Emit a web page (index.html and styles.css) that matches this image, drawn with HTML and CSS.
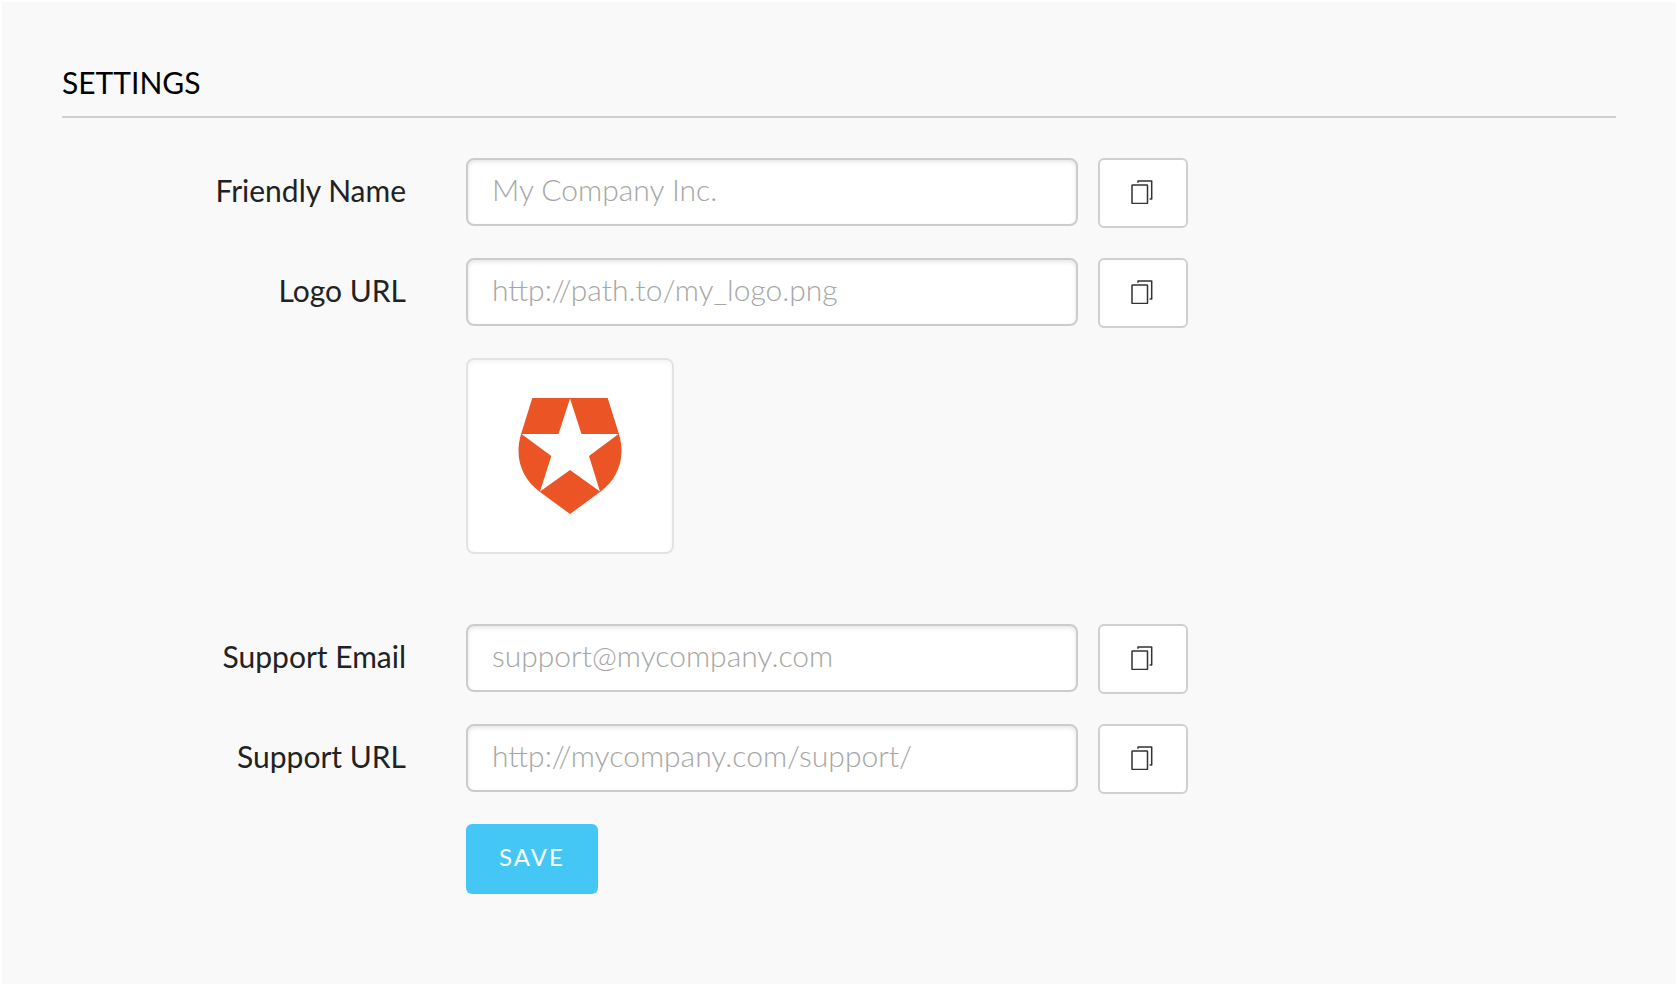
FILE: index.html
```html
<!DOCTYPE html>
<html lang="en">
<head>
<meta charset="utf-8">
<meta name="viewport" content="width=device-width, initial-scale=1">
<title>Settings</title>
<link rel="stylesheet" href="styles.css">
</head>
<body>
<svg class="sprite" aria-hidden="true">
  <symbol id="copy" viewBox="0 0 22 24">
    <rect x="1" y="5" width="15.500" height="18.500" rx="0.6"/>
    <path d="M7 2.800V1H20.700V19H18.600"/>
  </symbol>
</svg>
<main class="panel">
  <h1 class="title">SETTINGS</h1>
  <form class="form">
    <div class="row">
      <label class="label" for="name">Friendly Name</label>
      <div class="field">
        <input class="input" id="name" type="text" placeholder="My Company Inc.">
        <button class="copy" type="button" aria-label="Copy friendly name"><svg class="icon"><use href="#copy"/></svg></button>
      </div>
    </div>
    <div class="row">
      <label class="label" for="logo">Logo URL</label>
      <div class="field">
        <input class="input" id="logo" type="url" placeholder="http://path.to/my_logo.png">
        <button class="copy" type="button" aria-label="Copy logo URL"><svg class="icon"><use href="#copy"/></svg></button>
      </div>
    </div>
    <div class="row row-preview">
      <div class="preview">
        <svg class="logo" viewBox="0 0 104 116" role="img" aria-label="Company logo">
          <path fill="#eb5424" d="M14.300 0H89.700L101 36.300C108 60 100 80.500 82 94L52 116L22 94C4 80.500 -4 60 3 36.300Z"/>
          <path fill="#fff" d="M52 .5L63.500 36H100.500L71 58L82 93.500L52 72L22 93.500L33.300 58L3.500 36H40.500Z"/>
        </svg>
      </div>
    </div>
    <div class="row">
      <label class="label" for="email">Support Email</label>
      <div class="field">
        <input class="input" id="email" type="email" placeholder="support@mycompany.com">
        <button class="copy" type="button" aria-label="Copy support email"><svg class="icon"><use href="#copy"/></svg></button>
      </div>
    </div>
    <div class="row">
      <label class="label" for="url">Support URL</label>
      <div class="field">
        <input class="input" id="url" type="url" placeholder="http://mycompany.com/support/">
        <button class="copy" type="button" aria-label="Copy support URL"><svg class="icon"><use href="#copy"/></svg></button>
      </div>
    </div>
    <div class="row">
      <button class="save" type="submit">SAVE</button>
    </div>
  </form>
</main>
</body>
</html>
```
FILE: styles.css
```css
* { box-sizing: border-box; }

body {
  margin: 0;
  background: #f9f9f9;
  color: #222;
  font-family: Lato, "Open Sans", sans-serif;
  font-size: 30px;
}

.sprite { display: none; }

.panel {
  min-height: 100vh;
  padding: 60px;
  border: 2px solid #fff;
  border-bottom: 0;
}

.title {
  margin: 0 0 40px;
  padding-bottom: 14px;
  border-bottom: 2px solid #d0d0d0;
  color: #000;
  font-size: 30px;
  font-weight: 400;
  line-height: 40px;
}

.form {
  display: flex;
  flex-direction: column;
  gap: 30px;
}

.row {
  display: grid;
  grid-template-columns: 26% 46.45%;
}

.label {
  padding-right: 60px;
  line-height: 64px;
  text-align: right;
}

.field {
  display: flex;
  align-items: flex-start;
  gap: 20px;
  grid-column: 2;
}

.input {
  flex: 1;
  min-width: 0;
  height: 68px;
  padding: 0 24px 6px;
  border: 2px solid #ccc;
  border-radius: 8px;
  background: #fff;
  box-shadow: inset 0 2px 4px rgba(0, 0, 0, 0.1);
  color: #222;
  font: inherit;
  font-weight: 300;
}

.input::placeholder { color: #a6a6a6; opacity: 1; }

.copy {
  display: flex;
  align-items: center;
  justify-content: center;
  width: 90px;
  height: 70px;
  padding: 0 2px 2px 0;
  border: 2px solid #d0d0d0;
  border-radius: 6px;
  background: #fff;
}

.icon {
  width: 22px;
  height: 24px;
  fill: none;
  stroke: #333;
  stroke-width: 1.5;
  stroke-linejoin: round;
}

.row-preview { margin-bottom: 40px; }

.preview {
  display: flex;
  align-items: center;
  justify-content: center;
  grid-column: 2;
  justify-self: start;
  width: 208px;
  height: 196px;
  border: 2px solid #e3e3e3;
  border-radius: 8px;
  background: #fff;
  box-shadow: inset 0 2px 4px rgba(0, 0, 0, 0.05);
}

.logo { width: 104px; height: 116px; }

.save {
  grid-column: 2;
  justify-self: start;
  height: 70px;
  padding: 0 33px 6px;
  border: 0;
  border-radius: 6px;
  background: #44c7f4;
  color: #fff;
  font: inherit;
  font-size: 24px;
  letter-spacing: 2px;
}
```
